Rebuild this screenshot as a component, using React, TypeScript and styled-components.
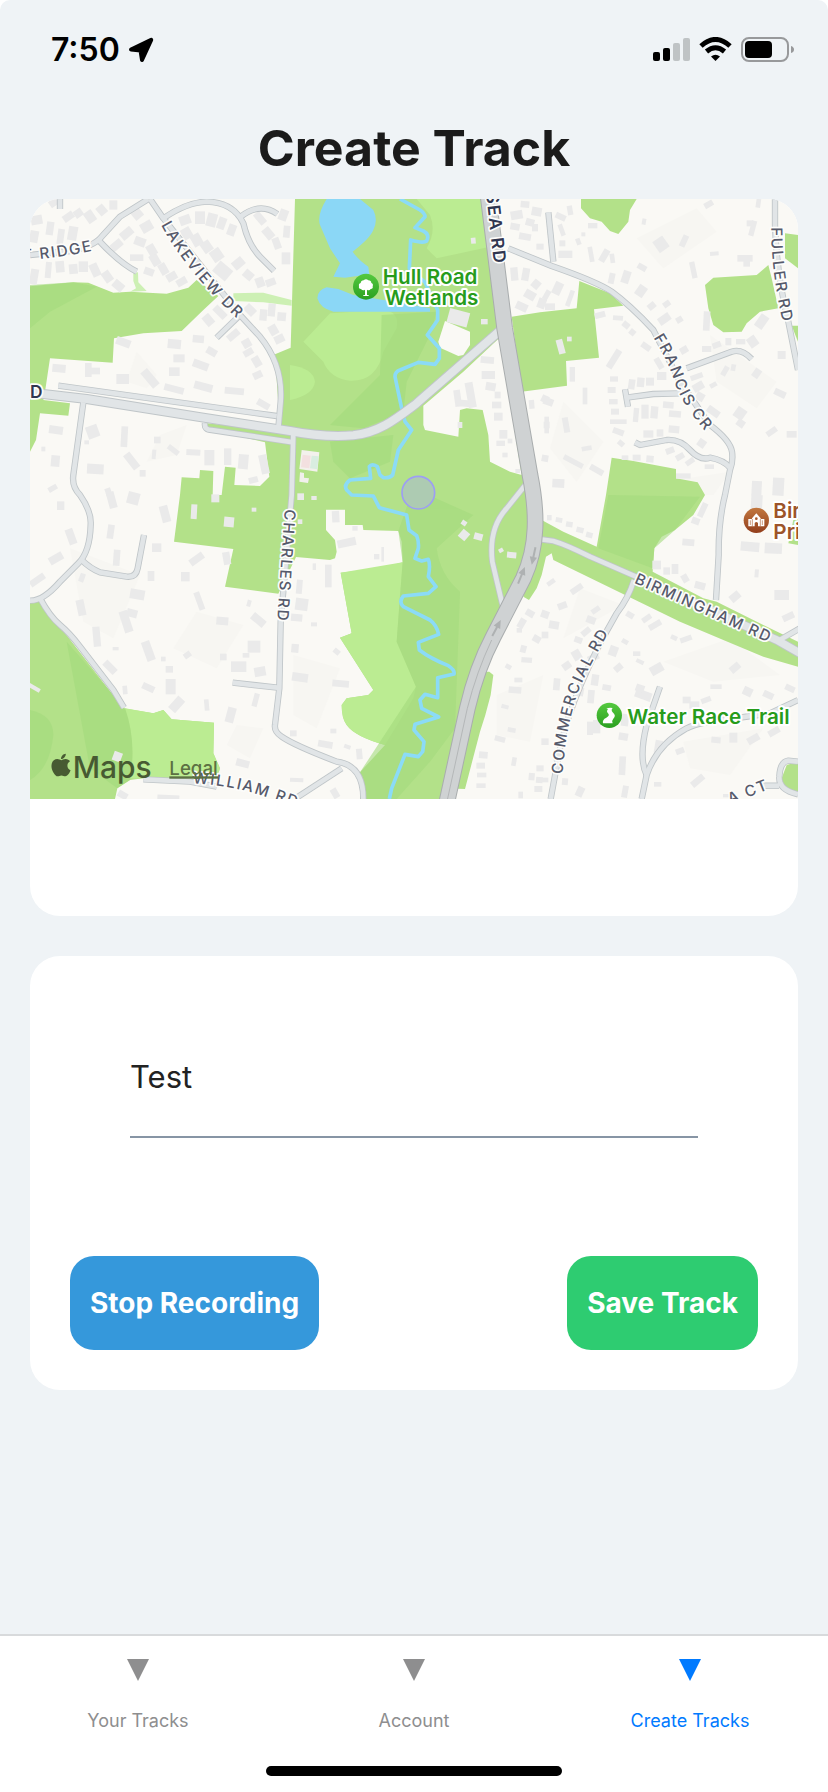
import React, { useState } from "react";
import styled, { createGlobalStyle } from "styled-components";
import { FaApple } from "react-icons/fa";

const GlobalStyle = createGlobalStyle`
  *, *::before, *::after { box-sizing: border-box; }
  html, body { margin: 0; background: #ffffff; }
  body { font-family: Inter, "Liberation Sans", sans-serif; color: #1b1b1b; }
`;

const Screen = styled.div`
  display: flex;
  flex-direction: column;
  min-height: 100vh;
  background: #eff3f6;
  border-radius: 10px 10px 0 0;
`;

const StatusBar = styled.header`
  display: flex;
  align-items: center;
  justify-content: space-between;
  height: 100px;
  padding: 0 34px 0 51px;
`;

const Clock = styled.div`
  display: flex;
  align-items: center;
  gap: 8px;
  color: #000000;
  font-size: 32px;
  font-weight: 600;
  line-height: 40px;
`;

const Main = styled.main`
  flex: 1;
  display: flex;
  flex-direction: column;
  padding: 0 30px 40px;
`;

const Title = styled.h1`
  margin: 0;
  padding: 16px 0 19px;
  text-align: center;
  font-size: 50px;
  font-weight: 700;
  line-height: 64px;
  color: #1b1b1b;
`;

const Stack = styled.div`
  display: flex;
  flex-direction: column;
  gap: 40px;
`;

const MapCard = styled.section`
  overflow: hidden;
  padding-bottom: 117px;
  border-radius: 30px;
  background: #ffffff;
`;

const MapCanvas = styled.svg`
  display: block;
  width: 100%;
  height: 600px;
`;

const FormCard = styled.form`
  display: flex;
  flex-direction: column;
  gap: 118px;
  padding: 80px 40px 40px;
  border-radius: 30px;
  background: #ffffff;
`;

const NameField = styled.label`
  display: block;
  margin: 0 60px;
  padding-bottom: 20px;
  border-bottom: 2px solid #8795a5;
`;

const NameInput = styled.input`
  display: block;
  width: 100%;
  height: 80px;
  padding: 0;
  border: 0;
  outline: 0;
  background: transparent;
  color: #222222;
  font-family: inherit;
  font-size: 31px;
`;

const Actions = styled.div`
  display: flex;
  justify-content: space-between;
`;

const ActionButton = styled.button<{ $color: string }>`
  height: 94px;
  padding: 0 20px;
  border: 0;
  border-radius: 24px;
  background: ${(p) => p.$color};
  color: #ffffff;
  font-family: inherit;
  font-size: 28px;
  font-weight: 700;
  white-space: nowrap;
`;

const TabBar = styled.footer`
  display: flex;
  flex-direction: column;
  align-items: center;
  border-top: 2px solid #d8dadc;
  background: #ffffff;
`;

const Tabs = styled.nav`
  display: flex;
  width: 100%;
  height: 130px;
`;

const Tab = styled.a<{ $active?: boolean }>`
  flex: 1;
  display: flex;
  flex-direction: column;
  align-items: center;
  gap: 28px;
  padding-top: 23px;
  color: ${(p) => (p.$active ? "#007aff" : "#8e8e8f")};
  font-size: 18px;
  line-height: 24px;
  text-decoration: none;
`;

const HomeIndicator = styled.div`
  width: 296px;
  height: 10px;
  margin-bottom: 16px;
  border-radius: 5px;
  background: #000000;
`;

const RoadLabel = styled.text`
  font-family: Inter, sans-serif;
  font-size: 46px;
  font-weight: 500;
  letter-spacing: 5px;
  fill: #565a6b;
  stroke: #fdfdfb;
  stroke-width: 10px;
  stroke-linejoin: round;
  paint-order: stroke;
`;

const HighwayLabel = styled(RoadLabel)`
  font-size: 52px;
  font-weight: 600;
  fill: #303650;
`;

const PlaceLabel = styled.text<{ $color: string }>`
  font-family: Inter, sans-serif;
  font-size: 62px;
  font-weight: 600;
  fill: ${(p) => p.$color};
  stroke: #ffffff;
  stroke-width: 12px;
  stroke-linejoin: round;
  paint-order: stroke;
`;

const MapsWordmark = styled.text`
  font-family: Inter, sans-serif;
  font-size: 90px;
  font-weight: 500;
  fill: #475a32;
`;

const LegalText = styled.text`
  font-family: Inter, sans-serif;
  font-size: 56px;
  font-weight: 500;
  fill: #5c7043;
`;

/* Map geometry: three drawing units to one screen pixel. */

const parks = [
  "M0 274L130 262L175 263L250 293L300 290L410 296L475 278L500 255L565 303L520 345L455 408L340 415L252 430L248 503L60 490L45 590L40 615L120 625L115 662L30 655L18 735L0 770Z",
  "M795 12L1365 12L1415 400L1490 840L1510 920L1500 1050L1470 1130L1400 1270L1330 1430L1240 1812L990 1812L990 1732L1065 1650Q975 1625 950 1590Q935 1570 935 1530L950 1510L1015 1500L1030 1485L930 1328L965 1315L932 1133L1060 1118L1118 1102L1115 1040L1105 1008L1000 1005L998 990L945 990L945 944L888 944L888 1005L915 1035L920 1070L915 1090L900 1095L798 1086L745 1196L585 1175L610 1062L432 1040L450 900L455 847L508 850L510 825L550 828L548 900L575 900L585 815L617 818L613 870L690 873L718 845L705 742L530 700L530 685L750 705L735 478L782 458Z",
  "M1653 12L1820 12L1800 45L1795 80L1765 117L1740 108L1715 80L1680 70L1653 40Z",
  "M2025 270L2050 248L2180 240L2215 210L2225 250L2245 340L2190 350L2150 385L2135 410L2080 412L2050 390L2035 340Z",
  "M2265 115L2304 120L2304 220L2265 190Z",
  "M2285 392L2304 392L2304 440Z",
  "M1445 365L1530 352L1640 340L1648 258L1740 295L1780 332L1692 343L1707 488L1608 498L1611 572L1475 590Z",
  "M1745 788L1810 798L1938 822L1938 850L2003 862L2025 900L1990 960L1935 1005L1895 1025L1873 1060L1868 1130L2020 1210L2060 1220L2200 1290L2304 1340L2304 1415L2200 1385L2080 1335L1950 1280L1570 1095L1565 1075L1548 1085L1535 1140L1520 1180L1497 1215L1480 1205L1535 1040L1535 975L1600 1010L1700 1055L1728 900Z",
  "M1340 1430L1378 1430L1390 1440L1382 1500L1366 1560L1350 1610L1305 1782L1240 1780Z",
  "M0 1220L28 1215L280 1540L370 1555L400 1545L425 1573L552 1583L550 1675L570 1720L560 1750L340 1750L300 1755L262 1780L255 1812L0 1812Z",
  "M2270 1710L2304 1700L2304 1795L2265 1782L2255 1750Z",
  "M2290 975L2304 970L2304 1050L2275 1045Z",
];

const parkLight = [
  "M820 440L900 355L1060 345Q1110 350 1100 400L1060 470Q1040 560 960 557Q900 550 880 500Z",
  "M932 1133L1118 1102L1110 1200L1100 1340L1158 1475L1150 1510L1065 1650Q975 1625 950 1590Q935 1570 935 1530L950 1510L1015 1500L1030 1485L930 1328L965 1315Z",
  "M1160 12L1365 12L1380 155L1220 190L1190 160Q1220 110 1200 60Z",
  "M780 510Q850 520 855 560Q850 600 780 615Z",
  "M285 1540L370 1555L400 1545L425 1573L552 1583L550 1675L570 1720L560 1750L300 1750Q320 1640 285 1540Z",
];

const parkDark = [
  "M1118 1102L1105 1008L1150 880L1330 960L1220 1060Q1230 1140 1290 1190L1275 1600L1200 1700L1100 1812L990 1812L990 1732L1158 1475L1100 1340Z",
  "M1055 360L1220 350L1200 420L1130 560L1120 650L1000 700L900 690L1050 540Z",
  "M900 740L1090 720L1080 800L960 850L910 800Z",
  "M0 1545Q70 1560 70 1620Q60 1720 0 1755Z",
  "M0 270L130 262L200 275L60 350L0 400Z",
  "M110 1340L285 1540Q320 1640 300 1755L262 1780L180 1720Z",
  "M1735 900L2010 905L1935 1005L1873 1060L1868 1120L1705 1060Z",
];

const clearings = [
  "M1180 632L1300 530L1412 425L1430 560L1475 840L1440 830L1380 800L1375 720L1358 645L1310 640L1290 645L1285 725L1185 705L1180 690Z",
  "M1245 378L1320 410L1320 450L1300 480L1285 483L1230 458L1225 440Z",
];

const lakes = [
  "M890 12Q860 60 870 90L900 160L930 205L910 245L945 248L1018 238L1015 215Q985 195 968 170Q1020 130 1030 105Q1045 75 1030 45L990 12Z",
  "M862 310Q862 285 890 277L925 282L970 300L1060 315L1200 340L1200 350L910 350Q870 340 862 310Z",
];

const stream =
  "M1110 12L1170 45Q1185 55 1185 65L1155 98L1180 108Q1200 118 1190 138Q1180 146 1142 135L1138 220L1185 262L1223 345L1223 375L1192 420L1228 460L1228 490L1215 508L1165 502L1110 525Q1095 530 1095 545L1115 640L1125 680L1145 705L1105 765L1088 840Q1080 850 1060 848L1050 840L1042 815Q1025 805 1018 815L1022 850L960 855Q940 870 950 885L965 900L1030 903L1048 938L1130 960L1137 1005L1160 1022Q1167 1040 1165 1060L1155 1090L1175 1098L1195 1093Q1202 1110 1195 1145L1218 1175L1195 1195L1120 1203Q1105 1220 1120 1235L1200 1275Q1220 1290 1226 1318L1165 1342L1168 1365Q1200 1390 1255 1412Q1275 1425 1272 1437L1223 1448L1223 1508L1185 1498L1170 1515L1175 1540L1226 1566L1155 1588L1152 1605L1182 1640L1178 1670L1165 1685L1125 1678L1085 1780L1078 1812";

const streets = [
  "M0 180L120 168Q190 155 215 125L270 65L355 12",
  "M205 135Q270 205 320 230",
  "M90 12V42",
  "M360 12L400 70L630 360L690 425Q760 510 752 620L745 700",
  "M400 70Q470 22 530 20Q610 22 640 85Q655 150 690 185L732 227",
  "M632 65Q690 20 742 57",
  "M625 365L560 428",
  "M85 572L740 663",
  "M525 685Q522 705 545 705L790 742",
  "M160 622L130 840Q125 875 150 900Q185 950 182 990Q180 1070 145 1105L90 1160Q40 1218 0 1217",
  "M155 1095Q180 1120 210 1132L290 1145Q318 1148 323 1120L342 1020",
  "M30 1210Q60 1265 90 1290T150 1355L250 1485L282 1538",
  "M790 715L785 900L752 1280L748 1480L735 1590Q732 1610 755 1625Q790 1650 920 1700Q1000 1710 1000 1812",
  "M935 1720L800 1808",
  "M608 1463L742 1478",
  "M340 1753L480 1760L560 1775",
  "M1486 870L1430 940Q1375 1000 1387 1100L1418 1232",
  "M1435 160L1565 213Q1700 260 1745 290Q1800 330 1870 405L1950 560L2040 690Q2100 735 2106 770Q2110 800 2100 825L2085 900Q2065 980 2066 1080L2058 1215",
  "M1555 52L1570 200",
  "M1970 520L2105 470Q2135 460 2165 492",
  "M1790 608L1870 597L1950 595",
  "M1785 583L1794 635",
  "M1815 742L1830 750L1910 735Q1950 732 1980 765T2040 788Q2080 795 2100 818",
  "M2235 12V90Q2240 240 2275 380L2304 525",
  "M1525 1032L1570 1038Q1610 1050 1680 1085L1830 1150",
  "M2240 1340L2310 1300",
  "M1812 1155Q1795 1210 1760 1255Q1630 1480 1590 1660L1562 1812",
  "M1890 1475L1850 1590Q1825 1690 1850 1740",
  "M1835 1812L1850 1740Q1880 1650 1970 1600Q2010 1580 2100 1572L2220 1555L2304 1515",
  "M2195 1772H2247",
  "M2304 1700L2275 1697Q2250 1700 2248 1745Q2245 1785 2304 1798",
];

const hullRoad =
  "M0 590L40 597L170 612L520 668L780 708C850 722 900 726 970 721C1050 712 1100 670 1160 625L1412 405";
const birminghamRoad = "M1830 1150L2240 1335L2310 1375";
const highway =
  "M1374 0L1424 400L1500 840Q1518 930 1515 1000Q1512 1080 1480 1150L1390 1325Q1340 1420 1312 1540L1250 1824";

type Building = [number, number, number, number, number];

const buildings: Building[] = [
  [72, 22, 30, 22, -35], [115, 65, 34, 22, -35], [145, 55, 26, 24, -35], [60, 100, 22, 40, 8], [92, 125, 20, 46, 8], [128, 115, 28, 42, 10],
  [12, 125, 26, 36, 10], [180, 65, 28, 36, -35], [215, 45, 26, 30, -40], [250, 30, 24, 28, 0], [20, 75, 34, 28, -10], [12, 245, 24, 46, 10],
  [55, 225, 18, 48, 5], [90, 215, 26, 34, -5], [130, 222, 26, 30, -5], [160, 215, 28, 32, 0], [195, 225, 26, 40, -25], [232, 245, 26, 34, -35],
  [265, 272, 26, 34, -50], [290, 115, 40, 26, -40], [260, 150, 36, 24, -40], [330, 140, 34, 26, 20], [320, 188, 40, 20, 0], [357, 230, 30, 22, 20],
  [375, 195, 26, 36, -30], [400, 222, 24, 34, -30], [425, 245, 32, 24, -30], [455, 260, 32, 22, -30], [350, 95, 36, 30, -30], [320, 55, 30, 34, -40],
  [365, 165, 26, 34, -30], [465, 75, 34, 28, -20], [510, 68, 30, 38, 0], [545, 75, 30, 40, 15], [575, 85, 24, 36, 20], [605, 105, 24, 34, 20],
  [470, 115, 30, 34, -30], [500, 135, 30, 36, -30], [530, 155, 30, 34, -35], [560, 180, 34, 36, -35], [578, 228, 40, 50, -50], [625, 205, 36, 28, -40],
  [655, 240, 30, 26, 40], [690, 262, 26, 30, -20], [722, 262, 30, 22, -20], [690, 70, 22, 40, -40], [715, 115, 26, 36, -40], [740, 145, 22, 34, -20],
  [760, 60, 26, 34, 20], [770, 110, 20, 36, 5], [768, 190, 26, 36, 0], [660, 345, 26, 34, -45], [700, 360, 22, 34, 5], [725, 345, 22, 38, 5],
  [755, 365, 26, 26, 5], [730, 405, 26, 30, -30], [748, 432, 30, 24, -25], [280, 442, 44, 24, 20], [433, 447, 40, 28, 5], [447, 490, 34, 24, 0],
  [505, 432, 34, 22, 5], [535, 375, 26, 34, -40], [570, 352, 22, 44, -45], [545, 470, 32, 22, 30], [512, 510, 48, 24, 20], [433, 530, 32, 26, 0],
  [610, 420, 40, 22, -40], [650, 445, 26, 26, -30], [655, 472, 30, 20, -30], [680, 500, 24, 32, -30], [683, 540, 28, 22, -25], [87, 520, 40, 24, 5],
  [175, 525, 20, 42, 0], [195, 528, 30, 20, 0], [278, 552, 38, 30, 0], [360, 550, 26, 60, -40], [432, 582, 60, 20, 15], [520, 575, 56, 24, 15],
  [613, 588, 58, 20, 5], [700, 628, 40, 20, 30], [78, 705, 42, 24, 8], [188, 710, 36, 38, -20], [283, 725, 20, 62, 3], [382, 735, 20, 20, 0],
  [430, 765, 38, 16, 38], [490, 772, 42, 18, 3], [538, 788, 30, 46, 0], [593, 785, 22, 50, 0], [640, 800, 30, 44, 5], [702, 808, 24, 58, -12],
  [76, 798, 26, 34, 5], [196, 822, 50, 30, 3], [305, 798, 24, 54, -38], [338, 835, 18, 20, 0], [372, 778, 12, 28, 5], [68, 880, 28, 16, -30],
  [40, 762, 12, 14, 0], [170, 742, 14, 12, 0], [235, 890, 18, 22, -20], [670, 855, 28, 18, -15],
  [92, 932, 22, 26, 0], [123, 1025, 24, 48, -20], [245, 915, 24, 50, -15], [310, 910, 36, 36, 15], [405, 957, 26, 50, -15], [242, 1010, 20, 42, 8],
  [260, 1088, 20, 48, 4], [78, 1090, 44, 24, -30], [22, 1155, 50, 20, -35], [156, 1148, 16, 26, 20], [363, 1143, 20, 30, 0], [380, 1058, 28, 26, 0],
  [322, 1198, 44, 30, 10], [153, 1238, 24, 48, -12], [288, 1280, 26, 66, -18], [306, 1255, 32, 24, 15], [200, 1325, 22, 60, -5], [240, 1417, 44, 22, 45],
  [257, 1361, 18, 10, 0], [355, 1368, 26, 60, -20], [355, 1478, 38, 20, 25], [285, 1485, 14, 26, -5], [422, 1475, 30, 46, 0], [418, 1423, 22, 20, 0],
  [400, 1392, 14, 14, 0], [472, 1380, 22, 18, -35], [440, 1528, 28, 46, 42], [530, 1530, 14, 34, -5], [500, 1092, 46, 22, -35], [466, 1145, 26, 28, 0],
  [508, 1218, 18, 56, -20], [577, 1278, 36, 24, 5], [590, 1090, 22, 38, -10], [657, 1225, 12, 20, 15], [685, 1275, 46, 24, 40], [672, 1355, 38, 36, 0],
  [580, 1386, 20, 20, 0], [648, 1381, 20, 14, 0], [626, 1415, 46, 32, 0], [690, 1430, 34, 28, -10], [602, 1560, 26, 46, 15], [677, 1515, 16, 40, 15],
  [638, 1705, 40, 22, 15], [415, 1808, 66, 16, 3], [278, 1800, 30, 20, 30], [492, 950, 18, 44, 3], [556, 910, 24, 24, 0], [672, 944, 14, 12, 0],
  [597, 981, 30, 30, 5], [812, 905, 20, 20, 0], [852, 909, 16, 12, 0], [810, 980, 14, 14, 0],
  [917, 965, 22, 34, -3], [975, 1000, 16, 14, 0], [950, 1043, 56, 24, -12], [1040, 1085, 16, 16, 0], [1058, 1078, 8, 44, 0], [895, 1143, 20, 68, 0],
  [853, 1115, 10, 20, 0], [808, 1175, 18, 42, 5], [815, 1228, 38, 36, 8], [800, 1268, 34, 22, 5], [852, 1288, 18, 12, 0], [795, 1360, 22, 26, 5],
  [920, 1370, 20, 16, 40], [932, 1466, 50, 20, 5], [810, 1447, 48, 26, 8], [790, 1615, 20, 18, 0], [886, 1648, 44, 20, 10], [952, 1655, 20, 12, 20],
  [910, 1608, 18, 14, 0], [988, 1677, 18, 32, -5], [800, 1755, 40, 12, 3], [915, 1795, 20, 30, -30],
  [1302, 984, 16, 14, 35], [1302, 1020, 26, 28, 40], [1345, 1025, 26, 20, 15], [1413, 1066, 14, 12, -30], [1445, 1080, 28, 18, 5],
  [1285, 368, 62, 44, 15], [1330, 137, 14, 18, -5], [1363, 380, 20, 16, 0], [1290, 690, 14, 18, 0], [1372, 495, 40, 20, 5], [1375, 540, 40, 24, 0],
  [1283, 610, 20, 50, -8], [1302, 625, 40, 20, 5], [1322, 600, 24, 76, -10], [1382, 575, 30, 24, 10], [1403, 600, 18, 20, 0], [1400, 630, 28, 20, 0],
  [1405, 665, 26, 24, 0], [1420, 718, 24, 26, 0], [1412, 745, 26, 16, 0], [1440, 738, 14, 14, 0], [1425, 780, 16, 14, 0], [1463, 828, 14, 12, 0],
  [1460, 60, 36, 26, -10], [1500, 82, 26, 22, 15], [1455, 95, 28, 20, 10], [1485, 125, 36, 20, 10], [1515, 98, 18, 22, 0], [1520, 50, 30, 26, 10],
  [1485, 28, 26, 20, 5], [1530, 155, 22, 18, 0], [1453, 237, 22, 40, -5], [1487, 238, 22, 38, 10], [1518, 268, 24, 26, 40], [1500, 300, 34, 26, 30],
  [1475, 335, 36, 24, 25], [1535, 325, 24, 30, 20], [1505, 628, 16, 26, -5], [1545, 612, 22, 22, 25], [1550, 690, 18, 20, 0], [1545, 790, 20, 20, 10],
  [1592, 65, 32, 18, 25], [1620, 46, 16, 28, -10], [1595, 105, 14, 36, -20], [1597, 145, 18, 18, 0], [1606, 178, 42, 22, 0], [1645, 140, 14, 20, -20],
  [1688, 92, 28, 16, 0], [1683, 178, 14, 46, -10], [1723, 182, 20, 40, 30], [1660, 118, 12, 12, 0], [1747, 190, 14, 28, -8], [1745, 250, 18, 32, 12],
  [1788, 246, 24, 38, 18], [1836, 217, 28, 18, 30], [1833, 288, 28, 34, 35], [1893, 148, 36, 40, -35], [1962, 138, 18, 36, 25], [2036, 28, 28, 18, -30],
  [2053, 176, 26, 12, -5], [1990, 225, 16, 50, -12], [2168, 100, 16, 46, 15], [2160, 85, 20, 18, 0], [2145, 190, 46, 20, 0], [2150, 200, 20, 30, 0],
  [2185, 25, 14, 26, 8], [1842, 80, 12, 18, 10], [1583, 280, 26, 38, 25], [1620, 310, 14, 50, 20], [1560, 335, 30, 20, 0], [1550, 300, 16, 30, 30],
  [1865, 333, 24, 20, -40], [1910, 327, 22, 18, -35], [1903, 372, 38, 24, -35], [1948, 374, 20, 18, -30], [1710, 360, 32, 18, -15], [1764, 369, 30, 14, 5],
  [1788, 390, 22, 18, 40], [1807, 412, 18, 18, 40], [1752, 492, 20, 62, 32], [1848, 455, 30, 18, 35], [1887, 505, 18, 36, -30], [1962, 465, 24, 20, -30],
  [2030, 378, 20, 58, 3], [2195, 380, 28, 42, 35], [2168, 440, 28, 32, -35], [2030, 462, 28, 18, 0], [2060, 450, 26, 18, -20], [2095, 440, 18, 22, 0],
  [2132, 440, 28, 16, 0], [1592, 455, 20, 44, -15], [1618, 432, 14, 14, 0], [1627, 538, 16, 44, 0], [1752, 552, 24, 16, 0], [1745, 585, 24, 18, 0],
  [1750, 620, 26, 16, 0], [1755, 650, 24, 18, 0], [1765, 680, 50, 14, 0], [1805, 568, 20, 30, 8], [1832, 562, 22, 28, 5], [1860, 560, 24, 24, 0],
  [1895, 543, 28, 24, 0], [1665, 603, 14, 50, 0], [1818, 660, 16, 42, 5], [1845, 650, 22, 42, 0], [1873, 652, 22, 36, 5], [1915, 630, 32, 20, 5],
  [1935, 657, 36, 20, 5], [1855, 717, 30, 22, 0], [1890, 714, 20, 22, 0], [1932, 703, 32, 22, 5], [1765, 710, 34, 18, 20], [1773, 745, 20, 16, 40],
  [1785, 788, 20, 14, 0], [1820, 788, 24, 18, 0], [1860, 792, 22, 20, 5], [1920, 767, 26, 18, -20], [1950, 785, 26, 18, -30], [1980, 800, 28, 16, -35],
  [2015, 745, 24, 24, 35], [2038, 815, 28, 14, 0], [2050, 650, 40, 22, 35], [2005, 575, 34, 24, -30], [2010, 605, 26, 24, 30], [2000, 545, 38, 16, -20],
  [2050, 570, 22, 14, -30], [2085, 528, 16, 30, 30], [2110, 518, 14, 20, 10], [2180, 535, 22, 28, 35], [2130, 655, 32, 34, 35], [2132, 685, 24, 22, 35],
  [2255, 480, 24, 24, 0], [2250, 595, 36, 20, 25], [2225, 710, 34, 18, -35], [2285, 718, 30, 20, 0], [1960, 843, 44, 16, 0], [1555, 620, 30, 22, 20],
  [1550, 690, 14, 50, 0], [1608, 690, 18, 46, -10], [1630, 800, 64, 16, 28], [1700, 825, 44, 18, 30], [1585, 865, 36, 26, 3], [1545, 790, 16, 16, 0],
  [2180, 880, 30, 44, 3], [2245, 875, 34, 54, 3], [1670, 760, 30, 14, -10],
  [2018, 945, 18, 44, 25], [1997, 978, 24, 20, 20], [1975, 1042, 36, 20, 5], [1880, 1110, 26, 26, 0], [1935, 1122, 20, 30, 0], [1910, 1128, 20, 22, 0],
  [1965, 1150, 20, 24, -30], [2010, 1172, 32, 22, 15], [2180, 1135, 12, 24, 5], [2115, 1205, 32, 24, -40], [2160, 1055, 56, 28, 5], [2230, 1060, 52, 32, 3],
  [2180, 925, 34, 50, 3], [2255, 1200, 44, 30, 0], [2275, 1265, 36, 20, -25], [1558, 968, 14, 16, 0], [1587, 975, 20, 14, 10], [1618, 988, 20, 16, 10],
  [1650, 1005, 22, 16, 15], [1678, 1020, 20, 16, 15], [1563, 1162, 26, 14, -35], [1640, 1182, 40, 18, -35], [1597, 1232, 28, 20, -20], [1545, 1258, 24, 22, 20],
  [1572, 1290, 30, 24, 10], [1545, 1320, 20, 20, 0], [1697, 1245, 28, 16, -35], [1683, 1275, 28, 22, 20], [1668, 1310, 30, 18, -40], [1645, 1335, 24, 18, 20],
  [1800, 1260, 24, 18, 30], [1850, 1270, 30, 16, -35], [1875, 1290, 40, 18, -30], [1932, 1328, 20, 14, 25], [1968, 1332, 36, 16, -20], [1750, 1368, 26, 30, 20],
  [1765, 1418, 26, 20, -40], [1820, 1376, 22, 14, 0], [1830, 1400, 24, 12, 25], [1880, 1422, 40, 28, -30], [1785, 1340, 20, 14, 30], [1690, 1388, 34, 20, -25],
  [1610, 1412, 26, 22, -35], [1640, 1380, 26, 30, -30], [1580, 1468, 20, 36, 5], [1695, 1455, 22, 34, 8], [1730, 1478, 26, 18, 10], [1683, 1505, 20, 40, 5],
  [1650, 1490, 22, 26, 10], [1840, 1500, 50, 26, 20], [1830, 1480, 26, 22, 20], [2058, 1475, 34, 14, 0], [2115, 1418, 32, 22, -40], [2153, 1490, 28, 26, 25],
  [2215, 1500, 32, 20, 25], [2280, 1480, 30, 18, 25], [2028, 1515, 30, 16, -20], [1993, 1530, 30, 22, 0], [1970, 1515, 24, 20, 0], [1700, 1595, 22, 40, 0],
  [1680, 1600, 18, 40, 0], [1785, 1575, 22, 36, 8], [1780, 1625, 28, 22, 10], [1885, 1655, 22, 38, 10], [1950, 1668, 26, 18, -20], [2058, 1635, 28, 18, 5],
  [2110, 1628, 24, 30, 0], [2170, 1632, 38, 22, -30], [2232, 1610, 36, 20, -30], [1777, 1712, 20, 56, 3], [1883, 1768, 22, 14, 0], [2003, 1757, 44, 20, -40],
  [1545, 1755, 20, 14, 0], [1605, 1760, 18, 20, 5], [1650, 1790, 22, 30, 25], [1785, 1790, 18, 36, 10], [2090, 1802, 22, 10, 0],
  [1580, 1680, 18, 34, 5], [1545, 1640, 22, 20, 0], [1500, 1255, 26, 20, 30], [1475, 1285, 20, 30, 30], [1520, 1332, 24, 20, 30], [1480, 1362, 18, 22, 15],
  [1468, 1306, 16, 14, 0], [1435, 1415, 18, 14, 30], [1490, 1395, 32, 16, 5], [1465, 1455, 24, 14, 0], [1455, 1485, 38, 20, 5], [1425, 1535, 22, 12, 15],
  [1410, 1632, 32, 16, 15], [1445, 1605, 24, 14, 10], [1452, 1700, 14, 26, 10], [1360, 1680, 26, 20, 5], [1352, 1712, 26, 18, 0], [1355, 1740, 28, 14, 0],
  [1353, 1772, 28, 14, 0], [1505, 1745, 18, 22, 5], [1530, 1720, 22, 18, 0], [1528, 1755, 20, 18, 5], [1525, 1782, 24, 18, 0], [1472, 1800, 14, 20, 0],
  [262, 1685, 26, 28, 20], [12, 1478, 40, 12, 30],
];

const terrain = [
  "M320 470L380 540L350 580L290 560Z", "M390 720L470 690L440 780L350 800Z", "M120 1060L330 1140L250 1330L160 1280Z",
  "M500 1250L640 1290L560 1420L430 1360Z", "M620 1590L700 1600L660 1690L590 1650Z", "M790 1380L930 1420L860 1600L790 1560Z",
  "M1820 130L2000 40L2060 110L1900 220Z", "M1600 620L1720 740L1640 860L1560 760Z", "M1900 860L2100 830L2050 900L1960 900Z",
  "M1650 1180L1780 1230L1600 1330Z", "M1900 1400L2100 1330L2250 1440L2050 1460Z", "M1960 1640L2200 1600L2100 1740L1980 1720Z",
  "M1400 1500L1540 1440L1500 1640L1400 1620Z", "M2040 420L2240 560L2180 640L2060 560Z",
];

type PathLabel = { id: string; d: string; text: string };

const roadLabels: PathLabel[] = [
  { id: "ridge", d: "M-22 196Q100 190 240 155", text: "T RIDGE" },
  { id: "lakeview", d: "M393 90Q475 240 640 388", text: "LAKEVIEW DR" },
  { id: "fuller", d: "M2224 97Q2222 240 2268 420", text: "FULLER RD" },
  { id: "francis", d: "M1870 428Q1915 500 1937 570Q1960 635 2048 735", text: "FRANCIS CR" },
  { id: "charles", d: "M764 942L738 1330", text: "CHARLES RD" },
  { id: "william", d: "M488 1765Q600 1770 700 1803T860 1860", text: "WILLIAM RD" },
  { id: "birmingham", d: "M1811 1163L2290 1376", text: "BIRMINGHAM RD" },
  { id: "commercial", d: "M1598 1738Q1610 1560 1660 1455T1770 1260", text: "COMMERCIAL RD" },
  { id: "court", d: "M2100 1828L2260 1766", text: "A CT" },
];

/* Lane arrows painted on the highway: x, y, heading in degrees. */
const laneArrows: [number, number, number][] = [
  [1474, 1142, 22],
  [1511, 1082, 192],
  [1399, 1300, 28],
];

const casing = "#bfc5c8";
const roadFill = "#e1e5e7";

function TrackMap() {
  return (
    <MapCanvas viewBox="0 12 2304 1800" preserveAspectRatio="xMidYMid slice" role="img" aria-label="Map">
      <defs>
        <linearGradient id="greenPin" x1="0" y1="0" x2="0" y2="1">
          <stop offset="0" stopColor="#55c93f" />
          <stop offset="1" stopColor="#2ba021" />
        </linearGradient>
        <linearGradient id="brownPin" x1="0" y1="0" x2="0" y2="1">
          <stop offset="0" stopColor="#c27840" />
          <stop offset="1" stopColor="#923e1c" />
        </linearGradient>
        {roadLabels.map((l) => (
          <path key={l.id} id={l.id} d={l.d} />
        ))}
        <path id="highway" d="M1368 -6L1402 300" />
      </defs>

      <rect x="0" y="12" width="2304" height="1800" fill="#faf9f5" />
      <g fill="#f7f6f2">
        {terrain.map((d) => <path key={d} d={d} />)}
      </g>
      <g fill="#b3e189">
        {parks.map((d) => <path key={d} d={d} />)}
      </g>
      <g fill="#bbec92">
        {parkLight.map((d) => <path key={d} d={d} />)}
      </g>
      <g fill="#a3db7d" opacity="0.6">
        {parkDark.map((d) => <path key={d} d={d} />)}
      </g>
      <path d="M310 235L324 232L325 262L350 288L300 290L318 280L310 258ZM610 295L700 293L785 315V332L700 322L610 318Z" fill="#cdf0b4" />
      <g fill="#faf9f5">
        {clearings.map((d) => <path key={d} d={d} />)}
      </g>
      <path d="M815 765L868 772L862 830L808 822Z" fill="#f3f1ec" />
      <path d="M818 779L842 782L838 820L813 817Z" fill="#f3e0e0" />
      <path d="M845 782L866 784L862 823L840 820Z" fill="#d9ede0" />
      <path d="M810 832L822 834L822 848L837 850L834 864L808 860Z" fill="#f1f0ec" />

      <g fill="#eaeaea">
        {buildings.map(([x, y, w, h, r], i) => (
          <rect key={i} x={x - w / 2} y={y - h / 2} width={w} height={h} transform={`rotate(${r} ${x} ${y})`} />
        ))}
      </g>

      <g fill="#8bd7f6">
        {lakes.map((d) => <path key={d} d={d} />)}
      </g>
      <path d={stream} fill="none" stroke="#8bdbf7" strokeWidth="11" strokeLinejoin="round" />

      <g fill="none" stroke={casing} strokeWidth="19" strokeLinejoin="round">
        {streets.map((d) => <path key={d} d={d} />)}
        <path d={hullRoad} strokeWidth="30" />
        <path d={birminghamRoad} strokeWidth="28" />
      </g>
      <g fill="none" stroke={roadFill} strokeWidth="14" strokeLinejoin="round">
        {streets.map((d) => <path key={d} d={d} />)}
        <path d={hullRoad} strokeWidth="24" />
        <path d={birminghamRoad} strokeWidth="23" />
      </g>
      <path d={highway} fill="none" stroke="#a9adae" strokeWidth="50" />
      <path d={highway} fill="none" stroke="#cfd2d3" strokeWidth="44" />
      <path d="M1385 1335Q1340 1430 1312 1540L1250 1824" fill="none" stroke="#b4b7b8" strokeWidth="3" />
      <g fill="#aeb1b2">
        {laneArrows.map(([x, y, r]) => (
          <path key={x} d="M-3 26V-4H-11L0 -28L11 -4H3V26Z" transform={`translate(${x} ${y}) rotate(${r})`} />
        ))}
      </g>

      <circle cx="1165" cy="893" r="49" fill="#adcbb2" stroke="#9d9ef3" strokeWidth="5" />

      {roadLabels.map((l) => (
        <RoadLabel key={l.id}>
          <textPath href={`#${l.id}`}>{l.text}</textPath>
        </RoadLabel>
      ))}
      <HighwayLabel>
        <textPath href="#highway">SEA RD</textPath>
      </HighwayLabel>
      <HighwayLabel x="0" y="609">D</HighwayLabel>

      <circle cx="1008" cy="275" r="39" fill="url(#greenPin)" />
      <path
        d="M1005 300V284Q998 288 993 282Q985 282 987 273Q985 266 992 264Q993 256 1001 256Q1008 249 1015 256Q1024 256 1024 264Q1031 267 1028 274Q1030 282 1022 282Q1018 288 1011 284V300H1016V303H1000V300Z"
        fill="#ffffff"
      />
      <PlaceLabel $color="#279c1b" x="1058" y="266">Hull Road</PlaceLabel>
      <PlaceLabel $color="#279c1b" x="1064" y="330">Wetlands</PlaceLabel>

      <circle cx="1738" cy="1561" r="38" fill="url(#greenPin)" />
      <path
        d="M1729 1541Q1738 1536 1748 1539Q1742 1545 1748 1552Q1760 1562 1750 1571Q1744 1577 1748 1585H1719Q1716 1574 1729 1568Q1741 1562 1734 1555Q1728 1549 1734 1543Z"
        fill="#ffffff"
      />
      <PlaceLabel $color="#279c1b" x="1792" y="1586">Water Race Trail</PlaceLabel>

      <circle cx="2179" cy="976" r="38" fill="url(#brownPin)" />
      <path
        d="M2155 994V972H2166V970L2179 955L2192 970V972H2203V994H2184V984Q2179 978 2174 984V994Z"
        fill="#ffffff"
      />
      <circle cx="2179" cy="971" r="4" fill="#a9592d" />
      <path d="M2167 972V994M2191 972V994M2161 976V990M2197 976V990" stroke="#b3683c" strokeWidth="2" />
      <PlaceLabel $color="#9d5429" x="2230" y="968">Bir</PlaceLabel>
      <PlaceLabel $color="#9d5429" x="2230" y="1033">Pri</PlaceLabel>

      <FaApple x="54" y="1671" size="78" color="#475a32" />
      <MapsWordmark x="128" y="1748">Maps</MapsWordmark>
      <a href="#legal">
        <LegalText x="418" y="1740">Legal</LegalText>
        <rect x="418" y="1744" width="146" height="7" fill="#5c7043" />
      </a>
    </MapCanvas>
  );
}

function LocationArrow() {
  return (
    <svg width="26" height="26" viewBox="0 0 26 26" aria-hidden="true">
      <path
        d="M3 12.500L23.200 2.800L14 23L12.500 13.500Z"
        fill="#000000"
        stroke="#000000"
        strokeWidth="4"
        strokeLinejoin="round"
      />
    </svg>
  );
}

function StatusIcons() {
  return (
    <svg width="142" height="26" viewBox="0 0 142 26" aria-label="Signal, Wi-Fi and battery">
      <rect x="1" y="15" width="7" height="9" rx="2" />
      <rect x="11" y="11" width="7" height="13" rx="2" />
      <rect x="21" y="6" width="7" height="18" rx="2" fill="#bfc3c5" />
      <rect x="31" y="1" width="7" height="23" rx="2" fill="#bfc3c5" />
      <g fill="none" stroke="#000000" strokeWidth="5">
        <path d="M49 9Q63.500 -4 78 9" />
        <path d="M54.500 14.500Q63.500 7 72.500 14.500" />
      </g>
      <path d="M59 19.500Q63.500 16 68 19.500L63.500 24Z" />
      <rect x="90" y="1" width="46" height="23" rx="7" fill="none" stroke="#98999b" strokeWidth="2" />
      <rect x="93" y="4" width="27" height="17" rx="4" />
      <path d="M139 9Q142 10 142 12.500T139 16Z" fill="#98999b" />
    </svg>
  );
}

function TabTriangle() {
  return (
    <svg width="22" height="22" viewBox="0 0 22 22" aria-hidden="true">
      <path d="M0 0H22L11 22Z" fill="currentColor" />
    </svg>
  );
}

const tabs = ["Your Tracks", "Account", "Create Tracks"];

export default function App() {
  const [name, setName] = useState("Test");
  return (
    <>
      <GlobalStyle />
      <Screen>
        <StatusBar>
          <Clock>
            7:50
            <LocationArrow />
          </Clock>
          <StatusIcons />
        </StatusBar>
        <Main>
          <Title>Create Track</Title>
          <Stack>
            <MapCard>
              <TrackMap />
            </MapCard>
            <FormCard onSubmit={(e) => e.preventDefault()}>
              <NameField>
                <NameInput aria-label="Track name" value={name} onChange={(e) => setName(e.target.value)} />
              </NameField>
              <Actions>
                <ActionButton type="button" $color="#3598db">Stop Recording</ActionButton>
                <ActionButton type="submit" $color="#2ecc71">Save Track</ActionButton>
              </Actions>
            </FormCard>
          </Stack>
        </Main>
        <TabBar>
          <Tabs>
            {tabs.map((label) => (
              <Tab key={label} href="#" $active={label === "Create Tracks"}>
                <TabTriangle />
                {label}
              </Tab>
            ))}
          </Tabs>
          <HomeIndicator />
        </TabBar>
      </Screen>
    </>
  );
}
